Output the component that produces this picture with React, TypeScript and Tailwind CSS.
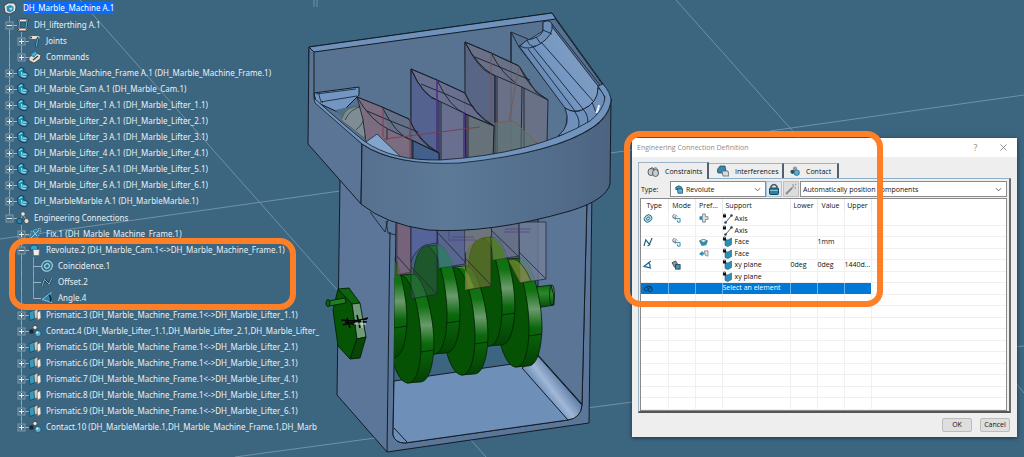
import React from 'react';

type IconKind = 'product' | 'mechanism' | 'joints' | 'commands' | 'part' | 'connections' | 'fix' | 'revolute' | 'coincidence' | 'offset' | 'angle' | 'prismatic' | 'contact';
type Guide = 'none' | 'line' | 'plus' | 'minus' | 'first' | 'last' | 'leaf' | 'leafEnd';
type Node = { label: string; icon: IconKind; guides: Guide[] };

const assembly: Node[] = [
    { label: 'DH_lifterthing A.1', icon: 'mechanism', guides: ['minus'] },
    { label: 'Joints', icon: 'joints', guides: ['line', 'plus'] },
    { label: 'Commands', icon: 'commands', guides: ['line', 'last'] },
    { label: 'DH_Marble_Machine_Frame A.1 (DH_Marble_Machine_Frame.1)', icon: 'part', guides: ['plus'] },
    { label: 'DH_Marble_Cam A.1 (DH_Marble_Cam.1)', icon: 'part', guides: ['plus'] },
    { label: 'DH_Marble_Lifter_1 A.1 (DH_Marble_Lifter_1.1)', icon: 'part', guides: ['plus'] },
    { label: 'DH_Marble_Lifter_2 A.1 (DH_Marble_Lifter_2.1)', icon: 'part', guides: ['plus'] },
    { label: 'DH_Marble_Lifter_3 A.1 (DH_Marble_Lifter_3.1)', icon: 'part', guides: ['plus'] },
    { label: 'DH_Marble_Lifter_4 A.1 (DH_Marble_Lifter_4.1)', icon: 'part', guides: ['plus'] },
    { label: 'DH_Marble_Lifter_5 A.1 (DH_Marble_Lifter_5.1)', icon: 'part', guides: ['plus'] },
    { label: 'DH_Marble_Lifter_6 A.1 (DH_Marble_Lifter_6.1)', icon: 'part', guides: ['plus'] },
    { label: 'DH_MarbleMarble A.1 (DH_MarbleMarble.1)', icon: 'part', guides: ['plus'] },
];

const connections: Node[] = [
    { label: 'Engineering Connections', icon: 'connections', guides: ['first'] },
    { label: 'Fix.1 (DH_Marble_Machine_Frame.1)', icon: 'fix', guides: ['none', 'plus'] },
];

const revolute: Node[] = [
    { label: 'Revolute.2 (DH_Marble_Cam.1<->DH_Marble_Machine_Frame.1)', icon: 'revolute', guides: ['none', 'minus'] },
    { label: 'Coincidence.1', icon: 'coincidence', guides: ['none', 'line', 'leaf'] },
    { label: 'Offset.2', icon: 'offset', guides: ['none', 'line', 'leaf'] },
    { label: 'Angle.4', icon: 'angle', guides: ['none', 'line', 'leafEnd'] },
];

const joints: Node[] = [
    { label: 'Prismatic.3 (DH_Marble_Machine_Frame.1<->DH_Marble_Lifter_1.1)', icon: 'prismatic', guides: ['none', 'plus'] },
    { label: 'Contact.4 (DH_Marble_Lifter_1.1,DH_Marble_Lifter_2.1,DH_Marble_Lifter_', icon: 'contact', guides: ['none', 'plus'] },
    { label: 'Prismatic.5 (DH_Marble_Machine_Frame.1<->DH_Marble_Lifter_2.1)', icon: 'prismatic', guides: ['none', 'plus'] },
    { label: 'Prismatic.6 (DH_Marble_Machine_Frame.1<->DH_Marble_Lifter_3.1)', icon: 'prismatic', guides: ['none', 'plus'] },
    { label: 'Prismatic.7 (DH_Marble_Machine_Frame.1<->DH_Marble_Lifter_4.1)', icon: 'prismatic', guides: ['none', 'plus'] },
    { label: 'Prismatic.8 (DH_Marble_Machine_Frame.1<->DH_Marble_Lifter_5.1)', icon: 'prismatic', guides: ['none', 'plus'] },
    { label: 'Prismatic.9 (DH_Marble_Machine_Frame.1<->DH_Marble_Lifter_6.1)', icon: 'prismatic', guides: ['none', 'plus'] },
    { label: 'Contact.10 (DH_MarbleMarble.1,DH_Marble_Machine_Frame.1,DH_Marb', icon: 'contact', guides: ['none', 'last'] },
];

const iconArt: Record<IconKind, React.ReactNode> = {
    product: (
        <>
            <path d="M0 4 L4 1 L10 1 L12 4 L11.500 9 L6 12 L1 10.500 Z" fill="#e4e4e0" stroke="#2c3338" strokeWidth=".8" />
            <path d="M2.500 4.500 L6 3 L9.500 4.500 L9.500 8.500 L6 10.500 L3 9 Z" fill="#2a8fb5" />
            <path d="M5 6 L8.500 5.500 L7 9 Z" fill="#a8e2f3" />
        </>
    ),
    mechanism: (
        <>
            <path d="M2 1.500 L10 1.500 M1.500 10.500 L9.500 10.500" stroke="#2a2f33" strokeWidth="3.400" strokeLinecap="round" />
            <path d="M2 1.500 L10 1.500 M1.500 10.500 L9.500 10.500" stroke="#eee8e0" strokeWidth="2" strokeLinecap="round" />
            <path d="M2.500 3 L2 9 M9.700 3 L9 9" stroke="#153c4f" strokeWidth="2.400" />
            <path d="M2.500 3 L2 9 M9.700 3 L9 9" stroke="#49b4da" strokeWidth="1.200" />
            <g fill="#3a342f">
                <circle cx="2.200" cy="1.500" r=".7" /><circle cx="10" cy="1.500" r=".7" />
                <circle cx="1.600" cy="10.500" r=".7" /><circle cx="9.300" cy="10.500" r=".7" />
            </g>
        </>
    ),
    joints: (
        <>
            <path d="M2 2.500 L9 2.500" stroke="#e6dfd7" strokeWidth="3" strokeLinecap="round" />
            <path d="M8.500 4 L7.500 11" stroke="#16445a" strokeWidth="2.600" strokeLinecap="round" />
            <path d="M8.500 4 L7.500 11" stroke="#49b4da" strokeWidth="1.200" strokeLinecap="round" />
            <circle cx="2" cy="2.500" r="1.100" fill="#3a342f" /><circle cx="8.800" cy="2.500" r=".8" fill="#3a342f" />
        </>
    ),
    commands: (
        <>
            <path d="M0 6 L7 2 L12 4 L11 8 L5 12 L0 9.500 Z" fill="#e5ded5" stroke="#30363a" strokeWidth=".7" />
            <path d="M1 4 L6 0 L8.500 2 L5 6 Z" fill="#3eb0d8" stroke="#16445a" strokeWidth=".6" />
            <path d="M4 9 L9 5" stroke="#333" strokeWidth="1.300" />
        </>
    ),
    part: (
        <>
            <path d="M.5 3 L4 .3 L7 1.500 L6.500 5 L9.500 5.500 L11.500 8 L9.500 11.500 L5 11.500 L1 8.500 Z" fill="#2a8db0" stroke="#123c50" strokeWidth=".9" />
            <path d="M2 3.500 L5 1.800 M4.500 5 L5 9 L8.800 9.900 M6 6.800 L9.200 7.300" stroke="#93dcf0" strokeWidth="1.200" fill="none" />
        </>
    ),
    connections: (
        <>
            <path d="M6 3 L3 8 M6 3 L10 8" stroke="#9fb0bb" strokeWidth="1" />
            <circle cx="6" cy="2" r="2.200" fill="#e9e6e2" stroke="#394046" strokeWidth=".7" />
            <rect x="0" y="6.500" width="5" height="5" rx="1" fill="#2785ab" stroke="#15384a" strokeWidth=".7" />
            <circle cx="9.500" cy="9" r="2.500" fill="#e2ddd6" stroke="#30363a" strokeWidth=".7" />
        </>
    ),
    fix: (
        <>
            <path d="M0 11 L2.500 3 L11 0 L12 4 L8 10 Z" fill="#2f7d9f" stroke="#9cc2d2" strokeWidth=".8" strokeDasharray="1.500 1" />
            <path d="M2 10 L10 2 M4 3 L8 8" stroke="#9bd3e6" strokeWidth="1" />
        </>
    ),
    revolute: (
        <>
            <path d="M1.500 3 Q5.500 -1 8.500 3 L8.500 6 L1.500 6 Z" fill="#37a4cc" stroke="#174355" strokeWidth=".7" />
            <path d="M4 5.500 L10.500 5.500 L10 11.500 L4.500 11.500 Z" fill="#f0ece6" stroke="#5f6a70" strokeWidth=".7" />
        </>
    ),
    coincidence: (
        <>
            <ellipse cx="6" cy="6" rx="5.500" ry="5" transform="rotate(-35 6 6)" fill="#2f6f8d" stroke="#a5d3e3" strokeWidth="1.100" />
            <ellipse cx="6" cy="6" rx="2.500" ry="2.200" transform="rotate(-35 6 6)" fill="none" stroke="#a5d3e3" strokeWidth="1.100" />
        </>
    ),
    offset: (
        <>
            <path d="M1 10.500 L3.500 3 M3.500 3.500 L8 8 M8 8.500 L11 1.500" stroke="#1b4156" strokeWidth="2.300" />
            <path d="M1 10.500 L3.500 3 M3.500 3.500 L8 8 M8 8.500 L11 1.500" stroke="#8bc4d8" strokeWidth=".9" />
        </>
    ),
    angle: (
        <>
            <path d="M10.500 .5 L1 7.500 L11 10.500" fill="#2b80a5" stroke="#8bc4d8" strokeWidth="1" />
            <path d="M8 3 Q11 6 9 9.500" fill="none" stroke="#15242c" strokeWidth="1.600" />
        </>
    ),
    prismatic: (
        <>
            <path d="M0 3.500 L5 .5 L5.500 9.500 L1 11.500 Z" fill="#319dc5" stroke="#143f52" strokeWidth=".7" />
            <path d="M5 2 L8.500 0 L9.500 8 L6 10 Z" fill="#cfd2cf" stroke="#4b5458" strokeWidth=".6" />
            <path d="M8 3.500 L11.500 1.500 L12 9 L8.500 11.500 Z" fill="#f3efe9" stroke="#4b5458" strokeWidth=".6" />
        </>
    ),
    contact: (
        <>
            <circle cx="6" cy="2.500" r="2.100" fill="#ece6df" stroke="#33393d" strokeWidth=".7" />
            <circle cx="2.500" cy="6.500" r="2.300" fill="#22292e" />
            <circle cx="9" cy="8.500" r="3" fill="#58b4d6" stroke="#174b61" strokeWidth=".7" />
            <circle cx="8.200" cy="7.600" r="1.100" fill="#d9f2fa" />
        </>
    ),
};

const TreeIcon: React.FC<{ kind: IconKind }> = ({ kind }) => (
    <svg viewBox="0 0 12 12" className="h-3 w-3 shrink-0 overflow-visible" fill="none" aria-hidden="true">{iconArt[kind]}</svg>
);

// One 12px cell of the connector column; lines overshoot by 1px so groups join up
const GuideCell: React.FC<{ guide: Guide; label: string }> = ({ guide, label }) => {
    const isToggle = guide === 'plus' || guide === 'minus' || guide === 'first' || guide === 'last';
    const isEnd = guide === 'last' || guide === 'leafEnd' || guide === 'first';
    const open = guide === 'minus' || guide === 'first';
    const art = (
        <svg viewBox="0 0 12 16" className="h-4 w-3 overflow-visible" fill="none" stroke="#9fb4c1" aria-hidden="true">
            {guide !== 'none' && <path d={isEnd ? 'M4.500 -1 V8.500' : 'M4.500 -1 V17'} strokeOpacity=".75" />}
            {guide.startsWith('leaf') && <path d="M4.500 8.500 H12" />}
            {isToggle && (
                <>
                    <path d="M8 8.500 H12" />
                    <rect x="1" y="5" width="7" height="7" fill="#4a7087" stroke="#8097a5" />
                    <path d={open ? 'M2 8.500 H7' : 'M2 8.500 H7 M4.500 6 V11'} stroke="#e3ebef" />
                </>
            )}
        </svg>
    );
    return isToggle ? (
        <button type="button" aria-label={`${open ? 'Collapse' : 'Expand'} ${label}`} className="h-4 w-3 shrink-0">{art}</button>
    ) : (
        <span className="h-4 w-3 shrink-0">{art}</span>
    );
};

const TreeRows: React.FC<{ nodes: Node[] }> = ({ nodes }) => (
    <ul>
        {nodes.map((node) => (
            <li key={node.label} className="flex h-4 items-center pl-[5px]">
                {node.guides.map((guide, i) => <GuideCell key={i} guide={guide} label={node.label} />)}
                <TreeIcon kind={node.icon} />
                <span className="pl-[5px]">{node.label}</span>
            </li>
        ))}
    </ul>
);

const SpecificationTree: React.FC = () => (
    <nav aria-label="Specification tree" className="relative flex w-[330px] max-w-full flex-col gap-px font-['Noto_Sans','Open_Sans',sans-serif] text-[8px] leading-4 whitespace-nowrap text-[#eaf1f5]">
        <div className="flex h-4 items-center gap-[7px] pl-1">
            <TreeIcon kind="product" />
            <span className="bg-[#0a6cff] leading-3 text-white">DH_Marble_Machine A.1</span>
        </div>
        <TreeRows nodes={assembly} />
        <div>
            <TreeRows nodes={connections} />
            <div className="relative">
                <TreeRows nodes={revolute} />
                <div className="pointer-events-none absolute -top-1 -bottom-1 left-[9px] w-[287px] rounded-2xl border-[6px] border-[#ff7f27]" />
            </div>
        </div>
        <TreeRows nodes={joints} />
    </nav>
);

const Cam: React.FC<{ x: number; y: number; id: string }> = ({ x, y, id }) => (
    <g stroke="#021f04" strokeWidth=".8">
        <path
            d={`M${x - 3} ${y - 54} L${x + 10} ${y - 55} C${x + 21} ${y - 50} ${x + 30} ${y - 12} ${x + 30} ${y + 16} C${x + 29} ${y + 40} ${x + 24} ${y + 53} ${x + 16} ${y + 53} L${x + 3} ${y + 54} Z`}
            fill={`url(#${id})`}
        />
        <path
            d={`M${x - 3} ${y - 54} C${x + 8} ${y - 52} ${x + 17} ${y - 15} ${x + 17} ${y + 15} C${x + 17} ${y + 38} ${x + 12} ${y + 54} ${x + 4} ${y + 54} C${x - 9} ${y + 54} ${x - 17} ${y + 16} ${x - 17} ${y - 14} C${x - 17} ${y - 38} ${x - 12} ${y - 54} ${x - 3} ${y - 54} Z`}
            fill="#055205"
        />
        <path d={`M${x + 17} ${y + 23} L${x + 30} ${y + 21}`} />
    </g>
);

const MarbleMachine: React.FC = () => (
    <svg viewBox="0 0 1024 457" preserveAspectRatio="xMinYMin slice" className="absolute inset-0 h-full w-full" fill="none" role="img" aria-label="Marble machine assembly">
        <defs>
            <linearGradient id="ring" x1="0" y1="0" x2="1" y2="0">
                <stop offset="0" stopColor="#57708f" /><stop offset=".35" stopColor="#5c7998" />
                <stop offset=".7" stopColor="#546f8e" /><stop offset="1" stopColor="#4c6480" />
            </linearGradient>
            <linearGradient id="chute" gradientUnits="userSpaceOnUse" x1="530" y1="85" x2="585" y2="50">
                <stop offset="0" stopColor="#5a7ba3" /><stop offset=".45" stopColor="#7497c2" />
                <stop offset=".85" stopColor="#7d9cc2" /><stop offset="1" stopColor="#4d678a" />
            </linearGradient>
            <linearGradient id="fillet" gradientUnits="userSpaceOnUse" x1="545" y1="400" x2="566" y2="384">
                <stop offset="0" stopColor="#6688b1" /><stop offset=".45" stopColor="#a0b8d8" /><stop offset="1" stopColor="#5c7ba2" />
            </linearGradient>
            <linearGradient id="camEdge" x1="0" y1="0" x2="0" y2="1">
                <stop offset="0" stopColor="#0a6b0a" /><stop offset=".3" stopColor="#127312" /><stop offset=".47" stopColor="#6b9a6c" />
                <stop offset=".64" stopColor="#0b680c" /><stop offset="1" stopColor="#044004" />
            </linearGradient>
            <linearGradient id="shaft" x1="0" y1="0" x2="0" y2="1">
                <stop offset="0" stopColor="#0b6a0b" /><stop offset=".35" stopColor="#2d872d" /><stop offset="1" stopColor="#044b04" />
            </linearGradient>
            <clipPath id="opening">
                <path d="M395 200 L588 200 L585 400 Q582 418 568 420 L405 443 Q394 442 394 432 Z" />
            </clipPath>
        </defs>

        {/* Ground plane axes */}
        <g stroke="#a9bfcd" strokeWidth=".9" opacity=".55">
            <path d="M80 0 L340 293 M0 239 L340 191 M235 457 L390 436 M470 439 L486 457 M587 408 L640 401 M610 153 L632 150 M676 0 L806 146 M770 131 L1024 95 M1010 347 L1024 346 M1014 381 L1024 393" />
            <path d="M314 0 V7 M317 0 V7" />
        </g>

        {/* Lower housing */}
        <g stroke="#131c26" strokeWidth="1">
            <path d="M340 180 L337 395 L387 452 L589 423 L592 190 Z" fill="#5b7698" />
            <path d="M390 232 L387 452" />
            <path d="M396 225 L393 435 Q395 443 405 443 L568 420 Q581 417 582 404 L587 200 L398 210 Z" fill="#3c657f" />
            <path d="M538 200 L587 200 L582 404 L538 355 Z" fill="#5b7597" />
            <path d="M394 381 L540 360 L582 405 Q581 417 568 420 L405 443 Q395 443 393 435 Z" fill="#6d8fb8" />
            <path d="M522 368 L538 356 L582 405 Q581 418 568 420 Z" fill="url(#fillet)" />
            <path d="M394 428 L407 442" />
        </g>

        {/* Camshaft */}
        <path d="M536 287 L551 285 Q555 295 554 305 L536 308 Z" fill="url(#shaft)" stroke="#021f04" strokeWidth=".8" />
        <ellipse cx="552" cy="295" rx="2.500" ry="10" stroke="#021f04" strokeWidth=".8" />
        <g clipPath="url(#opening)">
            <Cam x={512} y={313} id="camEdge" />
            <Cam x={485} y={292} id="camEdge" />
            <Cam x={458} y={321} id="camEdge" />
            <Cam x={430} y={300} id="camEdge" />
            <Cam x={404} y={329} id="camEdge" />
            <Cam x={377} y={305} id="camEdge" />
            {/* Lower ends of the translucent lifters */}
            <g strokeWidth=".8">
                <path d="M397 222 H411 V272 L397 275 Z" fill="#8a6378" fillOpacity=".72" stroke="#5a2f3c" />
                <path d="M411 222 H437 V294 L411 299 Z" fill="#5a6384" fillOpacity=".3" stroke="#1e2b33" />
                <path d="M411 222 H437 V243 L425 245 Q415 250 411 262 Z" fill="#5a63a0" fillOpacity=".75" stroke="#262a5c" />
                <path d="M437 222 H465 V264 L439 268 Z" fill="#6a6599" fillOpacity=".62" stroke="#2b2350" />
                <path d="M437 244 Q449 248 453 266 L439 268 Z" fill="#317a6c" fillOpacity=".8" />
                <path d="M465 222 H491 V286 L466 290 Z" fill="#807a3e" fillOpacity=".6" stroke="#2a2d16" />
                <path d="M465 222 H491 V236 Q475 236 465 253 Z" fill="#707683" fillOpacity=".9" />
                <path d="M454 268 L465 266 V290 L474 288 Q467 267 460 268 Z" fill="#8c9a3a" fillOpacity=".6" />
                <path d="M491 222 H519 V256 L493 260 Z" fill="#74748c" fillOpacity=".75" stroke="#2c2c38" />
                <path d="M491 237 Q502 243 505 258 L493 260 Z" fill="#4f7c2a" fillOpacity=".9" />
                <path d="M519 222 H546 V279 L520 283 Z" fill="#75809a" fillOpacity=".8" stroke="#252c38" />
                <path d="M508 260 Q520 255 531 281 L520 283 Z" fill="#7a8a35" fillOpacity=".75" stroke="#2d3a12" />
                <path d="M397 256 L411 272 M411 267 L437 294 M437 232 L465 262 M465 258 L491 285 M491 230 L519 257 M519 252 L546 279" stroke="#1c2630" />
                <path d="M449 228 V241 M450 240 H476 M452 237 H474 M504 232 H530 M505 229 H531" stroke="#4a2f8a" strokeOpacity=".7" />
            </g>
        </g>

        {/* Hex nut and pin on the left wall */}
        <g stroke="#021f04" strokeWidth=".9">
            <path d="M338 289 L333 310 L338 346 L350 359 L357 339 L352 304 Z" fill="#055505" />
            <path d="M338 289 L349 288 L360 303 L352 304 Z" fill="#0d640d" />
            <path d="M352 304 L360 303 L366 337 L357 339 Z" fill="#6f9b78" />
            <path d="M357 339 L366 337 L360 358 L350 359 Z" fill="#064706" />
            <path d="M328 301 L345 298 L346 303 L329 306 Z" fill="#237d23" />
            <ellipse cx="328" cy="303" rx="2" ry="3.500" fill="#0b640b" />
        </g>
        <path d="M341 320 L367 322 M343 325 L368 318 M347 318 L350 328 M357 315 L360 328 M345 322 L356 325 M352 321 L367 319" stroke="#050805" strokeWidth="1.600" />
        <path d="M354 324 H366 M362 320 V328" stroke="#dbe7dd" strokeWidth=".9" />

        {/* Upper housing: back plate and hopper interior */}
        <g stroke="#131c26" strokeWidth="1" strokeLinejoin="round">
            <path d="M309 47 L552 13 L603 84 Q616 105 605 122 Q580 148 500 158 L445 163 L361 144 L309 103 Z" fill="#587291" />
            <path d="M309 47 L552 13 L556 19 L314 52 Z" fill="#6f92bd" />
            <path d="M309 47 L314 52 L314 98 L362 144 L361 204 L308 144 Z" fill="#5a7596" />
            <path d="M314 93 L359 87 L359 95 L345 109 L340 113 L316 102 Z" fill="#7296c1" />
            <path d="M316 94 L356 89 M320 102 L357 96 M319 92 Q319 100 323 103" stroke="#24374d" />
            <path d="M335 110 L358 105 L392 157 L366 142 Z" fill="#4d6e83" stroke="none" />
            <path d="M345 112 Q352 104 365 108 Q372 122 364 138 Q352 128 341 120 Z" fill="#8f9899" fillOpacity=".75" stroke="#54645f" />
            <path d="M345 120 Q350 108 364 106 M356 130 Q366 122 366 108" stroke="#2b3840" strokeWidth=".8" />
        </g>

        {/* Chute on the right */}
        <g stroke="#172435" strokeWidth=".9" strokeLinejoin="round">
            <path d="M511 32 L519 47 L568 110 L565 133 L548 144 L511 150 Z" fill="#587493" />
            <path d="M511 32 L528 39 M511 32 V62" />
            <path d="M519 46 L543 31 L543 22 Q550 18 553 28 L598 86 Q600 102 582 110 Q572 113 565 108 Z" fill="url(#chute)" />
            <path d="M543 22 Q550 19 552 24 Q554 35 540 44 Q528 51 520 46 L527 40 Q540 38 543 31 Z" fill="#6c8fb9" />
            <path d="M527 40 Q530 48 536 46 M536 37 L541 44 M543 30 L552 34" />
            <path d="M533 47 L583 109 M541 42 L593 101 M528 49 L575 111 M552 24 L600 85 M556 20 L602 84" />
            <path d="M565 108 Q574 114 582 110 Q598 103 598 88 Q605 92 605 102 Q604 117 577 131 L558 136 Q572 125 565 108 Z" fill="#6e90ba" />
            <path d="M575 112 Q582 122 577 131 M583 109 Q590 117 587 127 M592 102 L597 115" />
            <path d="M596 113 Q598 111 599 105" stroke="#e9f2fb" strokeWidth="2" />
        </g>

        {/* Translucent lifters */}
        <g stroke="#18202a" strokeWidth=".9" strokeLinejoin="round">
            <path d="M465 42 L491 53 L519 66 L536 92 L548 100 L547 143 L520 152 L466 158 Z" fill="#6c7085" fillOpacity=".82" />
            <path d="M465 42 Q477 66 495 76 L495 155 L465 160 Z" fill="#596585" />
            <path d="M465 42 L491 53 L519 66 M465 42 Q478 68 489 73 L522 87 L548 100 M491 53 Q503 75 516 83 M519 66 Q530 90 548 100 M475 57 L502 68 L530 80 M495 76 V156 M522 87 L521 152 M497 77 V155 M524 88 V150" />
            <path d="M470 127 L509 121 Q517 121 521 128 L540 146 L470 158 Z" fill="#5e7770" fillOpacity=".55" stroke="#7e5d4c" />
            <path d="M491 53 V155 M519 66 L509 121" stroke="#77564e" />

            <path d="M411 69 L437 80 L465 93 Q473 113 494 126 L493 158 L441 162 L411 160 Z" fill="#6b6f8e" fillOpacity=".85" />
            <path d="M411 69 Q422 95 439 101 L439 162 L411 160 Z" fill="#53628f" />
            <path d="M465 114 L494 126 L493 158 L466 161 Z" fill="#66717a" />
            <path d="M411 69 L437 80 L465 93 M411 69 Q424 98 439 101 L466 114 L494 126 M437 80 Q450 108 466 114 M465 93 Q474 116 494 126 M421 84 L448 95 L474 107 M441 102 V161 M466 114 V161 M468 115 V161" />
            <path d="M437 80 V161 M464 112 V160" stroke="#4b2b88" strokeWidth="1.500" />

            <path d="M357 97 L382 107 L409 119 Q418 140 439 153 L439 161 L402 158 L366 141 Q364 118 357 97 Z" fill="#6a6e84" fillOpacity=".7" />
            <path d="M357 97 L382 107 L388 129 L411 140 V159 L402 158 L377 135 L366 141 Q366 118 357 97 Z" fill="#826b7e" fillOpacity=".8" stroke="none" />
            <path d="M412 140 L439 153 V161 L412 159 Z" fill="#435f8c" />
            <path d="M357 97 L382 107 L409 119 M357 97 Q371 121 388 129 L411 140 L439 153 M382 107 Q396 135 411 140 M409 119 Q420 145 439 153 M367 111 L393 122 L418 132 M387 129 V140 M413 141 V159" />
            <path d="M383 108 V137 M410 119 V158 M384 139 L480 127" stroke="#7a3c50" />
            <path d="M366 142 L377 134 L402 158 Q380 154 366 144 Z" fill="#83a5cc" stroke="#24374d" />
        </g>

        {/* Front ring */}
        <path d="M362 144 Q393 166 460 162 Q560 153 598 124 Q611 112 611 99 L610 184 Q606 200 570 211 Q490 234 428 230 Q385 224 361 204 Z" fill="url(#ring)" stroke="#131c26" />
        <path d="M314 98 Q345 126 364 141 Q392 161 440 160 Q535 154 590 121 Q604 110 605 97 L598 86 L603 84 Q611 93 611 101 Q609 116 593 127 Q555 153 460 163 Q395 166 362 144 L315 103 Z" fill="#7194be" stroke="#131c26" strokeWidth=".8" />
        <path d="M370 212 L385 232 L388 220 M386 221 L388 233 L396 235" stroke="#131c26" strokeWidth=".8" />
    </svg>
);

type Row = { type?: React.ReactNode; mode?: React.ReactNode; pref?: React.ReactNode; support?: [string, 'axis' | 'plane']; lower?: string; value?: string; upper?: string };

const Glyph: React.FC<{ children: React.ReactNode }> = ({ children }) => (
    <svg viewBox="0 0 10 10" className="ml-[3px] block h-[9px] w-[9px] overflow-visible" fill="none" aria-hidden="true">{children}</svg>
);

const RingGlyph = () => (
    <Glyph>
        <ellipse cx="4.500" cy="5" rx="4.500" ry="3.800" transform="rotate(-40 4.500 5)" fill="#c4e1ec" stroke="#1f6d8c" />
        <ellipse cx="4.500" cy="5" rx="2" ry="1.500" transform="rotate(-40 4.500 5)" stroke="#1f6d8c" />
    </Glyph>
);
const OffsetGlyph = () => <Glyph><path d="M0 9 L2 2 L6 7 L9 0 M4 9 L7 7" stroke="#23627e" strokeWidth="1.300" /></Glyph>;
const AngleGlyph = () => <Glyph><path d="M7.500 0 L0 6 L8 8 M5 2 Q8 5 6 8" stroke="#1f6888" strokeWidth="1.400" /></Glyph>;
const LinkGlyph: React.FC<{ stroke: string }> = ({ stroke }) => (
    <Glyph>
        <path d="M2 4 Q4 1 5.500 3 M5 3 Q8 1 9 5" stroke={stroke} />
        <ellipse cx="2.500" cy="5.500" rx="2" ry="2.300" stroke={stroke} />
        <ellipse cx="7" cy="6.500" rx="2" ry="2.300" stroke={stroke} />
    </Glyph>
);
const ModeGlyph = () => (
    <Glyph>
        <path d="M1 4 Q0 0 4 1 L6 3 M1 4 L4 6 V3 Z" stroke="#6b777e" />
        <path d="M4 5 H9 V9 H6 V7" fill="#e7f4fa" stroke="#3187ab" />
    </Glyph>
);
const LockedModeGlyph = () => (
    <Glyph>
        <path d="M0 2 L4 0 L6 3 L3 7 Z" fill="#87989f" stroke="#3f4a50" />
        <rect x="4" y="4" width="5" height="5" fill="#3b9cc2" stroke="#24434f" />
    </Glyph>
);
const CrossGlyph = () => (
    <Glyph>
        <path d="M4 0 H7 V3 H10 V6 H7 V9 H4 V6 H1 V3 H4 Z" fill="#dfe4e6" stroke="#6a7980" strokeWidth=".9" />
        <path d="M1 3 H4 V6 H1 Z" fill="#2c8db2" />
    </Glyph>
);
const BowlGlyph = () => (
    <Glyph>
        <path d="M0 3 L5 1 L10 3 L8 8 L3 9 Z" fill="#2f8fb3" />
        <path d="M1 3 L5 5 L9 3 L5 1.500 Z" fill="#e1edf2" stroke="#446571" strokeWidth=".7" />
    </Glyph>
);
const ArrowsGlyph = () => (
    <Glyph>
        <path d="M4 2 L0 5.500 L4 8 V6 H6 V4 H4 Z" fill="#3490b3" />
        <path d="M6 2 L10 2 V8 L7 7 Z" fill="#dde3e5" stroke="#6a7980" strokeWidth=".8" />
    </Glyph>
);

const SupportGlyph: React.FC<{ kind: 'axis' | 'plane' }> = ({ kind }) => (
    <svg viewBox="0 0 10 10" className="h-[10px] w-[10px] shrink-0 overflow-visible" fill="none" aria-hidden="true">
        {kind === 'axis' ? (
            <>
                <path d="M3 8 L8 2" stroke="#4b5a63" strokeWidth="1" />
                <circle cx="2.500" cy="8.500" r="1.300" fill="#31444f" /><circle cx="8.500" cy="1.500" r="1.300" fill="#31444f" />
            </>
        ) : (
            <path d="M2 2.500 L5 3 L8.500 1 V7.500 L5 9.500 L2 8.500 Z" fill="#2c8fb5" stroke="#1c5c78" strokeWidth=".6" />
        )}
        <rect x="0" y="1" width="3" height="2.500" fill="#111" /><path d="M.6 1 V0 H2.400 V1" stroke="#111" strokeWidth=".7" />
    </svg>
);

const rows: Row[] = [
    { type: <RingGlyph />, mode: <ModeGlyph />, pref: <CrossGlyph />, support: ['Axis', 'axis'] },
    { support: ['Axis', 'axis'] },
    { type: <OffsetGlyph />, mode: <ModeGlyph />, pref: <BowlGlyph />, support: ['Face', 'plane'], value: '1mm' },
    { pref: <ArrowsGlyph />, support: ['Face', 'plane'] },
    { type: <AngleGlyph />, mode: <LockedModeGlyph />, support: ['xy plane', 'plane'], lower: '0deg', value: '0deg', upper: '1440d...' },
    { support: ['xy plane', 'plane'] },
];

const Chevron = () => (
    <svg viewBox="0 0 8 8" className="pointer-events-none mr-1 h-[7px] w-[7px] shrink-0" fill="none" stroke="#555" aria-hidden="true"><path d="M1 2.500 L4 5.500 L7 2.500" /></svg>
);

const ConstraintTable: React.FC = () => {
    const cell = 'border-r border-b border-[#f0f0f0] p-0';
    const picked = 'border-r border-[#6fb2e8] bg-[#0078d7] p-0';
    const rowHeight = 'odd:h-3 even:h-[11px]';
    return (
        <table className="w-full table-fixed border-collapse bg-white text-left leading-[10px] whitespace-nowrap">
            <colgroup>
                <col className="w-[27px]" /><col className="w-[27px]" /><col className="w-[27px]" /><col className="w-[68px]" />
                <col className="w-[27px]" /><col className="w-[27px]" /><col className="w-[27px]" /><col />
            </colgroup>
            <thead>
                <tr className="h-[14px]">
                    {['Type', 'Mode', 'Pref...'].map((h) => <th key={h} className="border-r border-[#e8e8e8] p-0 text-center font-normal">{h}</th>)}
                    <th className="border-r border-[#e8e8e8] p-0 pl-[3px] font-normal">Support</th>
                    {['Lower', 'Value', 'Upper'].map((h) => <th key={h} className="border-r border-[#e8e8e8] p-0 text-center font-normal">{h}</th>)}
                    <td />
                </tr>
            </thead>
            <tbody>
                {rows.map((row, i) => (
                    <tr key={i} className={rowHeight}>
                        <td className={cell}>{row.type}</td>
                        <td className={cell}>{row.mode}</td>
                        <td className={cell}>{row.pref}</td>
                        <td className={cell}>
                            {row.support && <span className="flex items-center gap-[2px]"><SupportGlyph kind={row.support[1]} />{row.support[0]}</span>}
                        </td>
                        <td className={cell}>{row.lower}</td>
                        <td className={cell}>{row.value}</td>
                        <td className={cell}>{row.upper}</td>
                        <td className="border-b border-[#f0f0f0] p-0" />
                    </tr>
                ))}
                <tr className={rowHeight}>
                    <td className={picked}><LinkGlyph stroke="#16344a" /></td>
                    <td className={picked} />
                    <td className={picked} />
                    <td className={`${picked} text-white`}>Select an element</td>
                    <td className={picked} />
                    <td className={picked} />
                    <td className="bg-[#0078d7] p-0" />
                    <td className="border-b border-[#f0f0f0] p-0" />
                </tr>
                {Array.from({ length: 10 }, (_, i) => (
                    <tr key={i} className={rowHeight}>
                        {Array.from({ length: 7 }, (_, c) => <td key={c} className={cell} />)}
                        <td className="border-b border-[#f0f0f0] p-0" />
                    </tr>
                ))}
            </tbody>
        </table>
    );
};

const ConnectionDialog: React.FC = () => (
    <section role="dialog" aria-labelledby="dialog-title" className="absolute top-[138px] right-[7px] w-[385px] bg-[#eeeeee] font-['Open_Sans','Noto_Sans',sans-serif] text-[7px] leading-[11px] text-[#111] shadow-[0_1px_4px_rgba(0,0,0,0.5)]">
        <header className="flex h-[19px] items-center bg-white pl-[5px] text-[#8c8c8c]">
            <h1 id="dialog-title" className="flex-1">Engineering Connection Definition</h1>
            <button type="button" className="w-[27px] text-[9px]" aria-label="Help">?</button>
            <button type="button" className="flex w-[28px] justify-center" aria-label="Close">
                <svg viewBox="0 0 8 8" className="h-[7px] w-[7px]" stroke="#888" fill="none" aria-hidden="true"><path d="M.5 .5 L7.500 7.500 M7.500 .5 L.5 7.500" /></svg>
            </button>
        </header>

        <div className="px-[6px] pt-[5px]">
            <div role="tablist" className="flex items-end">
                <button type="button" role="tab" aria-selected="true" className="relative z-10 -mb-px flex h-[17px] w-[71px] items-center gap-[6px] border-t border-r-2 border-l border-t-[#9bb3c4] border-r-[#53606b] border-l-[#9bb3c4] bg-[#eeeeee] pl-2">
                    <svg viewBox="0 0 12 12" className="h-3 w-3 shrink-0" fill="#c9cdcf" stroke="#555e63" aria-hidden="true">
                        <ellipse cx="4" cy="7" rx="3" ry="3.500" /><ellipse cx="8.500" cy="8" rx="3" ry="3.500" /><path d="M3 4 Q6 1 7 5 M6 4 Q10 1 11 6" fill="none" />
                    </svg>
                    Constraints
                </button>
                <button type="button" role="tab" aria-selected="false" className="flex h-[15px] w-[75px] items-center gap-[6px] border-t border-r-2 border-t-[#9bb3c4] border-r-[#53606b] pl-2">
                    <svg viewBox="0 0 12 12" className="h-3 w-3 shrink-0" aria-hidden="true">
                        <path d="M0 5 L3 1 L8 1 L9 6 L6 8 L1 8 Z" fill="#3389ab" stroke="#1b4355" strokeWidth=".7" />
                        <path d="M5 6 L11 6 L12 11 L6 11 Z" fill="#d8dcdd" stroke="#59646a" strokeWidth=".8" />
                    </svg>
                    Interferences
                </button>
                <button type="button" role="tab" aria-selected="false" className="flex h-[15px] w-[55px] items-center gap-[6px] border-t border-r-2 border-t-[#9bb3c4] border-r-[#53606b] pl-[6px]">
                    <svg viewBox="0 0 12 12" className="h-[10px] w-[10px] shrink-0" aria-hidden="true">
                        <circle cx="6" cy="3" r="2.500" fill="#8f999e" /><circle cx="3" cy="7" r="2.500" fill="#2f4e5c" /><rect x="5" y="5" width="6" height="6" rx="2" fill="#57b1d3" stroke="#225a72" />
                    </svg>
                    Contact
                </button>
            </div>

            <div role="tabpanel" className="border-t border-r-2 border-b-2 border-l border-t-[#8fb0cb] border-r-[#6b6b6b] border-b-[#555] border-l-[#9bb3c4] pt-[2px] pl-px pr-[2px]">
                <div className="flex h-4 items-stretch">
                    <label htmlFor="connection-type" className="flex w-[30px] items-center pl-px">Type:</label>
                    <div className="flex w-[96px] items-center border border-[#8b8b8b] bg-white pl-1">
                        <svg viewBox="0 0 12 12" className="h-[9px] w-[9px] shrink-0" aria-hidden="true">
                            <path d="M1 3 Q5 -1 9 3 V6 H1 Z" fill="#3aa0c6" stroke="#1c4a5d" /><path d="M3 5 H10 V11 H4 Z" fill="#57b1d3" stroke="#1c4a5d" />
                        </svg>
                        <select id="connection-type" className="w-full min-w-0 flex-1 appearance-none bg-transparent pl-[2px]" defaultValue="Revolute">
                            <option>Revolute</option>
                        </select>
                        <Chevron />
                    </div>
                    <button type="button" aria-label="Lock" className="flex w-4 items-center justify-center border border-[#a9c3d4] bg-[#dfe8ee]">
                        <svg viewBox="0 0 12 12" className="h-3 w-3 shrink-0" fill="none" aria-hidden="true">
                            <path d="M3 6 V3.500 Q6 -.5 9 3.500 V6" stroke="#4c575d" strokeWidth="1.500" /><rect x="1.500" y="5" width="9" height="6.500" rx="1" fill="#2c7fa3" stroke="#1b4456" /><path d="M2 7.500 H10" stroke="#7fc3dc" />
                        </svg>
                    </button>
                    <button type="button" aria-label="Edit" className="mr-px ml-px flex w-4 items-center justify-center border border-[#bfbfbf] bg-[#dddddd]">
                        <svg viewBox="0 0 12 12" className="h-3 w-3 shrink-0" fill="none" aria-hidden="true"><path d="M1 11 L7 5" stroke="#8a8a8a" strokeWidth="2" /><path d="M7 5 L9 3 M8 1 V3 M10 2 L11 1 M9.500 5 H11" stroke="#a5a5a5" strokeWidth="1.300" /></svg>
                    </button>
                    <div className="flex min-w-0 flex-1 items-center border border-[#8b8b8b] bg-white">
                        <select aria-label="Positioning" className="w-full min-w-0 flex-1 appearance-none bg-transparent pl-[2px]" defaultValue="auto">
                            <option value="auto">Automatically position components</option>
                        </select>
                        <Chevron />
                    </div>
                </div>
                <div className="mt-px border border-[#8b8b8b]">
                    <ConstraintTable />
                </div>
            </div>
        </div>

        <footer className="flex justify-end gap-2 px-[7px] pt-[5px] pb-[5px]">
            <button type="button" className="h-[14px] w-[30px] rounded-xs border border-[#bcbcbc] bg-[#dedede]">OK</button>
            <button type="button" className="h-[14px] w-[30px] rounded-xs border border-[#bcbcbc] bg-[#dedede]">Cancel</button>
        </footer>

        {/* Highlight around the constraint settings */}
        <div className="pointer-events-none absolute -top-[7px] -left-2 z-20 h-[176px] w-[259px] rounded-2xl border-[6px] border-[#ff7f27]" />
    </section>
);

const App: React.FC = () => (
    <main className="relative min-h-screen overflow-hidden bg-[#3c657f]">
        <MarbleMachine />
        <SpecificationTree />
        <ConnectionDialog />
    </main>
);

export default App;
